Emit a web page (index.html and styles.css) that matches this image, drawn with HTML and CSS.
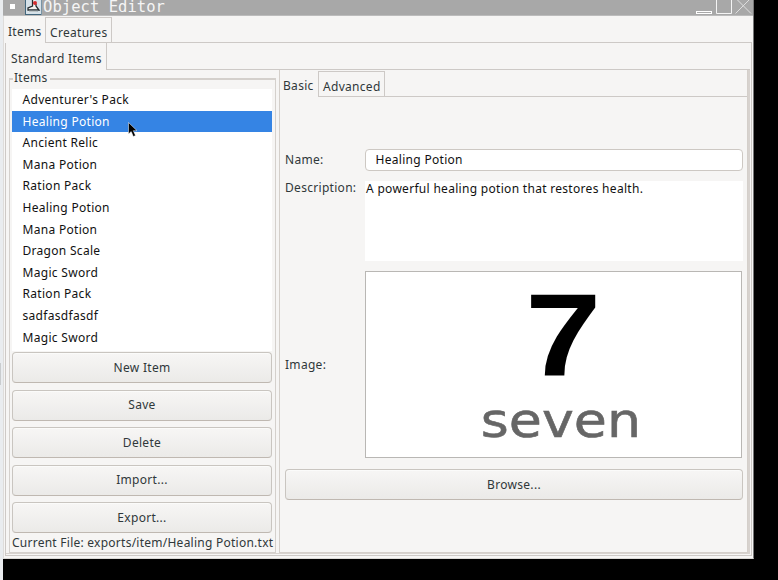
FILE: index.html
```
<!DOCTYPE html>
<html lang="en">
<head>
<meta charset="utf-8">
<title>Object Editor</title>
<link rel="stylesheet" href="styles.css">
</head>
<body>
<div class="desktop-edge"><div class="edge-mark"></div></div>
<main class="window">
  <header class="titlebar">
    <span class="menu-dot"></span>
    <svg class="app-icon" width="17" height="15" viewBox="0 0 17 15">
      <rect width="17" height="15" fill="#d6e1e8"/>
      <path d="M0 0H1V14H17V15H0Z" fill="#42667c"/>
      <path d="M16 0H17V15H16Z" fill="#7894a5"/>
      <path d="M7 0L10 0L12 5L14 9L11 12H4L2 9L6 7Z" fill="#f3f2ee"/>
      <path d="M7.5 0V6L3 8V10H14L11 6V4" stroke="#252c30" stroke-width="1.3" fill="none"/>
      <path d="M4 11H13" stroke="#8a979e"/>
      <circle cx="10" cy="3" r="2" fill="#d52c2d"/>
    </svg>
    <h1 class="title">Object Editor</h1>
    <svg class="controls" width="58" height="15" viewBox="0 0 58 15" fill="none">
      <rect x=".5" y="11.5" width="15" height="2" stroke="#fff"/>
      <path d="M20.5 0V13.5H35.5V0" stroke="#f4f4f4"/>
      <path d="M39.5 13.5L53.5 -.5M41 -.5L55 13.5" stroke="#dedede"/>
    </svg>
  </header>
  <nav class="tabs tabs-main"><span class="tab tab-items">Items</span><span class="tab raised tab-creatures">Creatures</span><span class="tab-line"></span></nav>
  <section class="main-pane">
    <nav class="tabs tabs-sub"><span class="tab tab-standard">Standard Items</span><span class="tab-line"></span></nav>
    <div class="workspace">
      <section class="items-group">
        <h2 class="group-title">Items</h2>
        <ul class="list">
          <li>Adventurer's Pack</li>
          <li class="selected">Healing Potion
            <svg class="cursor" width="10" height="16" viewBox="0 0 10 16"><path d="M.5 .5V12L3.2 9.5L5.3 14.5L7.5 13.5L5.3 8.7H9Z" fill="#000" stroke="#fff" stroke-width=".5"/></svg>
          </li>
          <li>Ancient Relic</li>
          <li>Mana Potion</li>
          <li>Ration Pack</li>
          <li>Healing Potion</li>
          <li>Mana Potion</li>
          <li>Dragon Scale</li>
          <li>Magic Sword</li>
          <li>Ration Pack</li>
          <li>sadfasdfasdf</li>
          <li>Magic Sword</li>
        </ul>
        <div class="actions">
          <button>New Item</button>
          <button>Save</button>
          <button>Delete</button>
          <button>Import...</button>
          <button>Export...</button>
        </div>
        <p class="status">Current File: exports/item/Healing Potion.txt</p>
      </section>
      <section class="details">
        <nav class="tabs tabs-detail"><span class="tab tab-basic">Basic</span><span class="tab raised tab-advanced">Advanced</span><span class="tab-line"></span></nav>
        <div class="form">
          <span class="label">Name:</span>
          <div class="field">Healing Potion</div>
          <span class="label label-top">Description:</span>
          <div class="textarea">A powerful healing potion that restores health.</div>
          <span class="label">Image:</span>
          <svg class="picture" viewBox="0 0 377 187">
            <text class="digit" transform="translate(160 104.5) scale(1.17 1)">7</text>
            <text class="word" x="115" y="167" textLength="162" lengthAdjust="spacingAndGlyphs">seven</text>
          </svg>
          <button class="browse">Browse...</button>
        </div>
      </section>
    </div>
  </section>
</main>
</body>
</html>
```
FILE: styles.css
```
* { box-sizing: border-box; }
body {
  margin: 0;
  width: 778px;
  height: 580px;
  overflow: hidden;
  display: flex;
  background: #000;
  color: #30383a;
  font: 12px/16px "Noto Sans", "DejaVu Sans", sans-serif;
  letter-spacing: 0.3px;
}
.desktop-edge { width: 3px; height: 580px; background: #e9ecef; padding-top: 363px; }
.edge-mark { width: 1px; height: 22px; background: #c9ccce; }
.window {
  width: 751px;
  height: 559px;
  background: #f6f5f4;
  border-left: 1px solid #dedcda;
  border-right: 1px solid #777;
  border-bottom: 1px solid #dad8d5;
}
.titlebar {
  height: 16px;
  margin-left: -1px;
  display: flex;
  background: #a8a8a8;
  border-bottom: 1px solid #bcbcbc;
}
.menu-dot { width: 5px; height: 5px; margin: 4px 11px 0 7px; background: #fff; }
.app-icon { flex: none; margin: 0 1px 0 -1px; }
.title {
  margin: -2px 0 0;
  color: #f5f5f5;
  font: 15.5px/18px "DejaVu Sans Mono", monospace;
  letter-spacing: 0.05px;
}
.controls { margin-left: auto; margin-right: -1px; }
.tabs { display: flex; }
.tab { flex: none; white-space: nowrap; }
.tab-line { flex: 1; border-bottom: 1px solid #cdc9c6; }
.raised { border: 1px solid #cdc9c6; }
.tabs-main { height: 27px; margin-right: 1px; }
.tab-items { width: 41px; padding: 8px 0 0 4px; }
.tab-creatures { width: 67px; margin-top: 1px; padding: 7px 0 0 4px; }
.main-pane {
  width: 747px;
  height: 513px;
  margin-left: 1px;
  border: solid #cdc9c6;
  border-width: 0 1px 1px;
}
.tabs-sub { height: 27px; margin-right: 1px; }
.tab-standard { width: 101px; padding: 8px 0 0 5px; border-right: 1px solid #cdc9c6; }
.workspace {
  display: flex;
  width: 744px;
  height: 484px;
  border: solid #d7d2ce;
  border-width: 0 2px 1px 0;
}
.items-group {
  width: 267px;
  height: 475px;
  margin: 8px 0 0 3px;
  padding: 0 2px;
  border: 1px solid #d4d0cc;
  border-top-width: 2px;
}
.group-title {
  width: 37px;
  height: 14px;
  margin: -9px 0 4px 1px;
  padding-left: 1px;
  background: #f6f5f4;
  font: inherit;
  line-height: 14px;
}
.list { list-style: none; margin: 0; padding: 0; width: 260px; height: 262px; background: #fff; color: #111; }
.list li { height: 21.6px; padding-left: 10.5px; line-height: 21.6px; }
.list .selected { position: relative; background: #3584e4; color: #fff; }
.cursor { position: absolute; left: 116px; top: 11px; z-index: 1; }
.actions { display: flex; flex-direction: column; gap: 6.5px; padding-top: 1px; }
button {
  height: 31px;
  width: 260px;
  margin: 0;
  padding: 0;
  border: 1px solid #c9c5c0;
  border-bottom-color: #bfb8b1;
  border-radius: 4px;
  background: linear-gradient(#f7f6f5, #ebeae8);
  box-shadow: inset 0 1px #fbfbfa;
  color: #30383a;
  font: inherit;
  letter-spacing: inherit;
}
.status { margin: 2px 0 0; white-space: nowrap; letter-spacing: 0.25px; }
.details { width: 470px; height: 483px; margin-left: 3px; border: 1px solid #d4cfca; border-top: 0; }
.tabs-detail { height: 27px; }
.tab-basic { width: 38px; padding: 8px 0 0 3px; }
.tab-advanced { width: 67px; margin-top: 1px; padding: 7px 0 0 4px; }
.form {
  display: grid;
  grid-template-columns: 80px 378px;
  grid-template-rows: 22px 80px 187px 31px;
  row-gap: 10px;
  padding: 52px 0 0 5px;
}
.label { align-self: center; }
.label-top { align-self: start; margin-top: -1px; }
.field {
  height: 22px;
  padding-left: 9.5px;
  line-height: 20px;
  background: #fff;
  color: #111;
  border: 1px solid #cdc8c3;
  border-radius: 4px;
}
.textarea { width: 378px; background: #fff; color: #111; padding-left: 1px; }
.picture { width: 377px; height: 187px; background: #fff; border: 1px solid #b9b7b4; }
.digit { font: bold 118px "Liberation Sans", sans-serif; letter-spacing: 0; }
.word { fill: #666; stroke: #666; stroke-width: 0.6px; font: 49px "DejaVu Sans", sans-serif; letter-spacing: 0; }
.browse { grid-column: 1 / 3; width: 458px; margin-top: 1px; }
```
